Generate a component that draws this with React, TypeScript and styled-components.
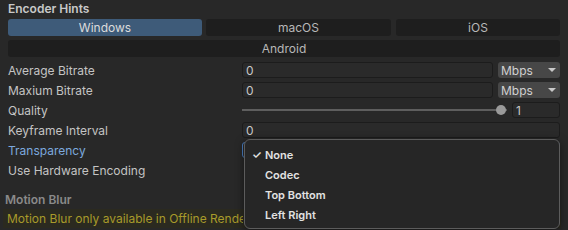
import React from 'react';
import styled, { createGlobalStyle } from 'styled-components';

const GlobalStyle = createGlobalStyle`
    html, body {
        margin: 0;
        padding: 0;
        background: #282828;
    }
    body {
        font-family: Inter, "Noto Sans", sans-serif;
        font-size: 12px;
        color: #c4c4c4;
    }
`;

const Panel = styled.div`
    position: relative;
    width: 568px;
    height: 230px;
    overflow: hidden;
    background: #282828;
`;

const Section = styled.div`
    padding: 0 8px;
`;

const SectionTitle = styled.div`
    height: 18px;
    line-height: 18px;
    font-weight: 600;
    color: #c8c8c8;
`;

const TabRow = styled.div`
    display: flex;
    gap: 4px;
    margin-top: 1px;
    width: 552px;
`;

const Tab = styled.div<{ selected?: boolean; width?: number }>`
    flex: ${props => props.width ? `0 0 ${props.width}px` : '1 1 0'};
    height: 17px;
    line-height: 17px;
    text-align: center;
    border-radius: 3px;
    background: ${props => props.selected ? '#3e5b79' : '#1e1e1e'};
    color: ${props => props.selected ? '#dcdcdc' : '#b8b8b8'};
`;

const SecondTabRow = styled(TabRow)`
    margin-top: 4px;
    margin-bottom: 3px;
`;

const Row = styled.div`
    display: grid;
    grid-template-columns: 234px 1fr;
    align-items: center;
    height: 20px;
    width: 552px;
`;

const Label = styled.div<{ focused?: boolean }>`
    color: ${props => props.focused ? '#7ca8de' : '#c4c4c4'};
    white-space: nowrap;
`;

const Controls = styled.div`
    display: flex;
    align-items: center;
    gap: 5px;
    height: 16px;
`;

const Field = styled.div<{ focused?: boolean }>`
    flex: 1 1 0;
    height: 16px;
    line-height: 16px;
    box-sizing: border-box;
    padding: 0 3px;
    background: #2a2a2a;
    border: 1px solid ${props => props.focused ? '#4a7fc4' : '#1c1c1c'};
    border-radius: 3px;
    color: #c8c8c8;
`;

const NumberField = styled(Field)`
    flex: 0 0 48px;
`;

const UnitSelect = styled.div`
    flex: 0 0 62px;
    height: 16px;
    box-sizing: border-box;
    padding: 0 4px 0 3px;
    display: flex;
    align-items: center;
    justify-content: space-between;
    background: #474747;
    border-radius: 3px;
    color: #d0d0d0;
`;

const Arrow = styled.span`
    width: 0;
    height: 0;
    border-left: 4px solid transparent;
    border-right: 4px solid transparent;
    border-top: 4px solid #c8c8c8;
`;

const Slider = styled.div`
    flex: 1 1 0;
    position: relative;
    height: 16px;
    display: flex;
    align-items: center;
`;

const Track = styled.div`
    flex: 1;
    height: 2px;
    background: #5e5e5e;
`;

const Thumb = styled.div`
    position: absolute;
    right: 1px;
    top: 3px;
    width: 10px;
    height: 10px;
    border-radius: 50%;
    background: #9a9a9a;
`;

const SubTitle = styled.div`
    margin-top: 10px;
    padding-left: 5px;
    height: 19px;
    line-height: 19px;
    font-weight: 600;
    color: #8a8a8a;
`;

const Warning = styled.div`
    margin-left: 3px;
    width: 558px;
    height: 19px;
    line-height: 19px;
    padding-left: 4px;
    box-sizing: border-box;
    background: #2b2a20;
    color: #a89a2a;
`;

/* the popup hides the rest of the message, so only the visible part is laid out */
const WarningText = styled.span`
    display: inline-block;
    max-width: 236px;
    white-space: nowrap;
    overflow: hidden;
    vertical-align: top;
`;

const Popup = styled.div`
    position: absolute;
    left: 244px;
    top: 139px;
    width: 316px;
    height: 90px;
    box-sizing: border-box;
    padding-top: 5px;
    background: #262626;
    border: 1px solid #5c5c5c;
    border-radius: 6px;
    box-shadow: 0 2px 8px rgba(0, 0, 0, 0.5);
`;

const MenuItem = styled.div`
    display: flex;
    align-items: center;
    height: 20px;
    padding-left: 7px;
    font-size: 11px;
    font-weight: 600;
    color: #e2e2e2;
`;

const Check = styled.span`
    flex: 0 0 13px;
    font-size: 11px;
    line-height: 1;
`;

const rows = ['None', 'Codec', 'Top Bottom', 'Left Right'];

const App = () => (
    <>
        <GlobalStyle />
        <Panel>
            <Section>
                <SectionTitle>Encoder Hints</SectionTitle>
                <TabRow>
                    <Tab selected width={194}>Windows</Tab>
                    <Tab width={185}>macOS</Tab>
                    <Tab style={{ marginLeft: 1 }}>iOS</Tab>
                </TabRow>
                <SecondTabRow>
                    <Tab>Android</Tab>
                </SecondTabRow>
                <Row>
                    <Label>Average Bitrate</Label>
                    <Controls>
                        <Field>0</Field>
                        <UnitSelect>Mbps<Arrow /></UnitSelect>
                    </Controls>
                </Row>
                <Row>
                    <Label>Maxium Bitrate</Label>
                    <Controls>
                        <Field>0</Field>
                        <UnitSelect>Mbps<Arrow /></UnitSelect>
                    </Controls>
                </Row>
                <Row>
                    <Label>Quality</Label>
                    <Controls>
                        <Slider>
                            <Track />
                            <Thumb />
                        </Slider>
                        <NumberField>1</NumberField>
                    </Controls>
                </Row>
                <Row>
                    <Label>Keyframe Interval</Label>
                    <Controls>
                        <Field>0</Field>
                    </Controls>
                </Row>
                <Row>
                    <Label focused>Transparency</Label>
                    <Controls>
                        <Field focused />
                    </Controls>
                </Row>
                <Row>
                    <Label>Use Hardware Encoding</Label>
                    <div />
                </Row>
            </Section>
            <SubTitle>Motion Blur</SubTitle>
            <Warning>
                <WarningText>Motion Blur only available in Offline Render mode</WarningText>
            </Warning>
            <Popup>
                {rows.map((item, i) =>
                    <MenuItem key={item}>
                        <Check>{i === 0 ? '✓' : ''}</Check>
                        {item}
                    </MenuItem>
                )}
            </Popup>
        </Panel>
    </>
);

export default App;
